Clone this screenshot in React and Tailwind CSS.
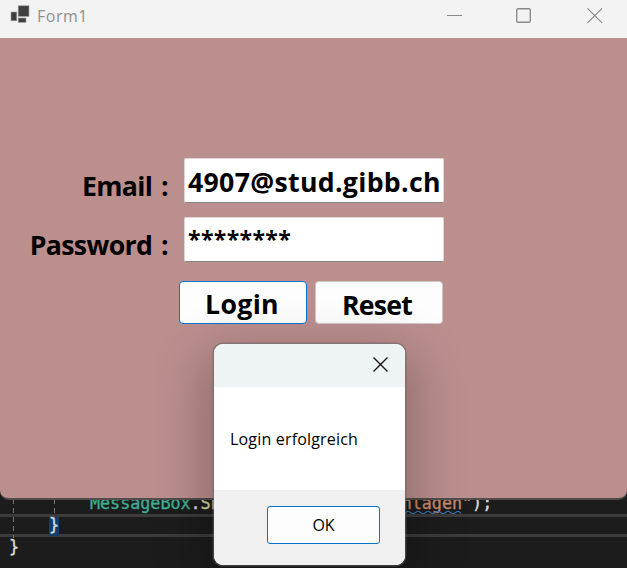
import React from "react";

function CodeEditor() {
  return (
    <div className="absolute inset-0 bg-[#1c1c1c] pt-[492px] font-['DejaVu_Sans_Mono',monospace] text-[16.75px] leading-[22px] text-[#dcdcdc] [-webkit-text-stroke:0.35px_currentColor]">
      <svg className="absolute left-0 top-[490px]" width="80" height="50" stroke="#777" strokeDasharray="5 4">
        <path d="M13.5 9V48M54.5 9V24" />
      </svg>
      <div className="h-[22px] whitespace-pre pl-[90px] tracking-[-0.03px]">
        <span className="text-[#3fae94]">MessageBox</span>.
        <span className="text-[#d5d5a0]">Show</span>(
        <span className="text-[#c98b70]">"Login fehlgeschlagen"</span>);
      </div>
      <div className="h-[23px] border-y-[3px] border-[#3c3c3c] pl-[49px] leading-[16px]">
        <span className="inline-block h-[19px] w-[10px] bg-[#113d6f]">{"}"}</span>
      </div>
      <div className="pl-[9px] leading-[20px]">{"}"}</div>
      <svg className="absolute left-[405px] top-[510px]" width="56" height="6" fill="none" stroke="#3b78b5" strokeWidth="1.2">
        <path d="M0 3.5l2-2 2 0 3 2 2 0 3-2 2 0 3 2 2 0 3-2 2 0 3 2 2 0 3-2 2 0 3 2 2 0 3-2 2 0 3 2 2 0 3-2 2 0 2 2" />
      </svg>
    </div>
  );
}

function TitleBar() {
  return (
    <div className="flex h-[38px] items-start bg-[#f3f3f3]">
      <svg className="ml-[10px] mt-[5px]" width="20" height="18" fill="#404040" stroke="#a0a0a0" strokeWidth="0.6">
        <rect x="8.2" y="0.8" width="10.8" height="10.6" />
        <rect x="1" y="7" width="5.8" height="8.8" />
        <rect x="8.2" y="13" width="7.8" height="4.4" />
      </svg>
      <span className="ml-[7px] mt-[5px] text-[16px] leading-[22px] tracking-[0.5px] text-[#8f8f8f]">Form1</span>
      <svg className="ml-auto mr-[24px] mt-[7px]" width="156" height="17" fill="none" stroke="#8a8a8a">
        <path d="M0 8.5H15" />
        <rect x="69.7" y="1.7" width="13.6" height="13.6" rx="1.5" strokeWidth="1.4" />
        <path d="M140.5 1.3L155 15.8M155 1.3L140.5 15.8" strokeWidth="1.2" />
      </svg>
    </div>
  );
}

function Field({ label, children }) {
  return (
    <div className="flex h-[45px]">
      <div className="mr-[16px] flex w-[168px] justify-end pt-[10px] text-[26.7px] leading-[36px]">
        <span className="tracking-[-0.65px] [word-spacing:2.5px]">{label}</span>
      </div>
      <div className="w-[260px] overflow-hidden whitespace-nowrap rounded-[2px] border border-b-[#858585] border-[#e0d4d4] bg-white pl-[3px] pt-[5px] text-[26.7px] leading-[36px]">
        {children}
      </div>
    </div>
  );
}

function FormWindow() {
  return (
    <div className="absolute left-0 top-0 h-[500px] w-[627px] overflow-hidden rounded-b-[9px] border-b-2 border-[#514d4d] bg-[#bc8f8f]">
      <TitleBar />
      <div className="flex flex-col gap-[14px] pt-[120px] font-bold text-black">
        <Field label="Email :">
          <span className="tracking-[0.3px]">4907@stud.gibb.ch</span>
        </Field>
        <Field label="Password :">
          <span className="block text-[23px] leading-[32px] tracking-[0.35px]">********</span>
        </Field>
      </div>
      <div className="flex gap-[8px] pl-[179px] pt-[19px] text-[26.7px] font-bold leading-[36px] text-black">
        <button className="flex h-[43px] w-[128px] justify-center rounded-[4px] border border-[#0874cf] bg-[#fdfdfd] pr-[2px] pt-[4px] tracking-[0.3px]">Login</button>
        <button className="flex h-[43px] w-[128px] justify-center rounded-[4px] border border-[#d0c8c8] bg-[#fdfdfd] pr-[4px] pt-[5px] tracking-[-0.8px]">Reset</button>
      </div>
    </div>
  );
}

function MessageDialog() {
  return (
    <div className="absolute left-[214px] top-[344px] flex h-[221px] w-[191px] flex-col rounded-[9px] bg-white text-[16px] text-black shadow-[0_0_0_1.5px_rgba(100,100,100,0.5),0_18px_50px_12px_rgba(0,0,0,0.24)]">
      <div className="flex h-[43px] justify-end rounded-t-[9px] bg-[#eef4f3] pr-[17px] pt-[13px]">
        <svg width="15" height="15" stroke="#151515" strokeWidth="1.4">
          <path d="M.5.5l14 14M14.5.5l-14 14" />
        </svg>
      </div>
      <div className="flex h-[103px] items-center pl-[16px]">
        <span className="tracking-[0.18px]">Login erfolgreich</span>
      </div>
      <div className="flex flex-1 items-start justify-end rounded-b-[9px] bg-[#f0f0f0] pr-[25px] pt-[16px]">
        <button className="h-[38px] w-[113px] rounded-[3px] border border-[#0874cf] bg-[#fdfdfd]">OK</button>
      </div>
    </div>
  );
}

export default function App() {
  return (
    <div className="relative h-[568px] w-[627px] overflow-hidden bg-[#1c1c1c] font-['Open_Sans','Noto_Sans',sans-serif]">
      <CodeEditor />
      <FormWindow />
      <MessageDialog />
    </div>
  );
}
